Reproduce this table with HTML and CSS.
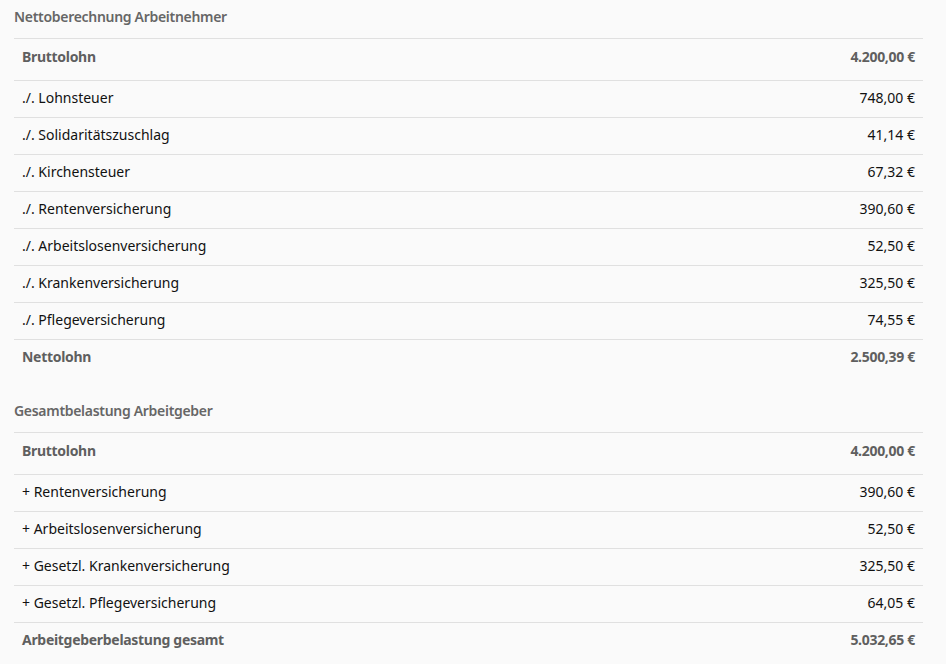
FILE: index.html
```html
<!DOCTYPE html>
<html lang="de">
<head>
    <meta charset="UTF-8">
    <meta name="viewport" content="width=device-width, initial-scale=1.0">
    <title>Brutto Netto</title>
    <link rel="stylesheet" href="styles.css">
</head>
<body>

    <div class="calc">
        <h3>Nettoberechnung Arbeitnehmer</h3>
        <table class="result">
            <tr class="total first"><td>Bruttolohn</td><td>4.200,00 €</td></tr>
            <tr><td>./. Lohnsteuer</td><td>748,00 €</td></tr>
            <tr><td>./. Solidaritätszuschlag</td><td>41,14 €</td></tr>
            <tr><td>./. Kirchensteuer</td><td>67,32 €</td></tr>
            <tr><td>./. Rentenversicherung</td><td>390,60 €</td></tr>
            <tr><td>./. Arbeitslosenversicherung</td><td>52,50 €</td></tr>
            <tr><td>./. Krankenversicherung</td><td>325,50 €</td></tr>
            <tr><td>./. Pflegeversicherung</td><td>74,55 €</td></tr>
            <tr class="total"><td>Nettolohn</td><td>2.500,39 €</td></tr>
        </table>

        <h3>Gesamtbelastung Arbeitgeber</h3>
        <table class="result">
            <tr class="total first"><td>Bruttolohn</td><td>4.200,00 €</td></tr>
            <tr><td>+ Rentenversicherung</td><td>390,60 €</td></tr>
            <tr><td>+ Arbeitslosenversicherung</td><td>52,50 €</td></tr>
            <tr><td>+ Gesetzl. Krankenversicherung</td><td>325,50 €</td></tr>
            <tr><td>+ Gesetzl. Pflegeversicherung</td><td>64,05 €</td></tr>
            <tr class="total"><td>Arbeitgeberbelastung gesamt</td><td>5.032,65 €</td></tr>
        </table>
    </div>

</body>
</html>
```

FILE: styles.css
```css
body {
    margin: 0;
    padding: 0;
    background-color: #fafafa;
    font-family: "Noto Sans", "Open Sans", sans-serif;
    font-size: 14px;
    color: #111;
}

.calc {
    padding: 0 23px 0 14px;
}

.calc h3 {
    margin: 0;
    height: 38px;
    line-height: 34px;
    font-size: 14px;
    font-weight: 600;
    letter-spacing: -0.3px;
    color: #666;
}

.calc table + h3 {
    margin-top: 18px;
}

table.result {
    width: 100%;
    border-collapse: collapse;
}

table.result td {
    border-top: 1px solid #e0e0e0;
    padding: 0 8px 2px;
    height: 34px;
    line-height: 20px;
}

table.result td:last-child {
    text-align: right;
}

table.result tr.total td {
    font-weight: 700;
    letter-spacing: -0.3px;
    color: #5f5f5f;
}

table.result tr.first td {
    height: 35px;
    padding-bottom: 6px;
}
```
